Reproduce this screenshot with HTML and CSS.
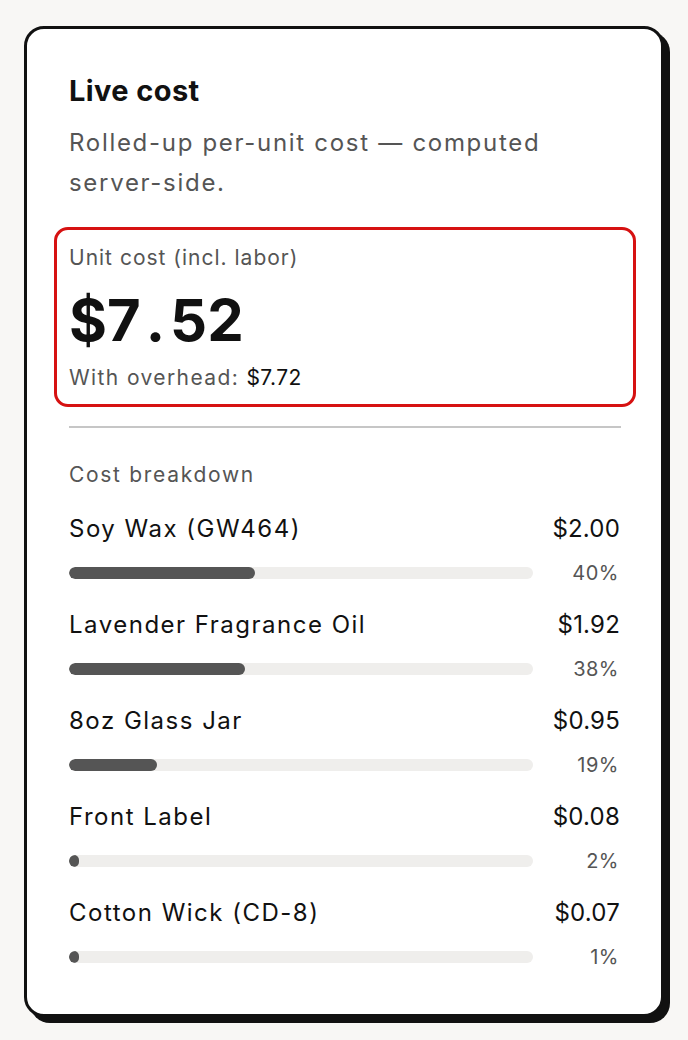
FILE: index.html
```html
<!DOCTYPE html>
<html lang="en">
<head>
  <meta charset="UTF-8" />
  <meta name="viewport" content="width=device-width, initial-scale=1" />
  <title>Live cost</title>
  <link rel="stylesheet" href="styles.css">
</head>
<body>
  <div class="card">
    <h2 class="title">Live cost</h2>
    <p class="sub">Rolled-up per-unit cost — computed server-side.</p>

    <div class="unit">
      <div class="unit-label">Unit cost (incl. labor)</div>
      <div class="unit-value">$7<span class="dot">.</span>52</div>
      <div class="unit-extra">With overhead: <span class="strong">$7.72</span></div>
    </div>

    <hr class="divider" />

    <h3 class="section">Cost breakdown</h3>
    <ul class="items">
      <li class="item">
        <div class="item-head"><span class="name">Soy Wax (GW464)</span><span class="price">$2.00</span></div>
        <div class="item-bar"><div class="track"><div class="fill" style="width:40%"></div></div><span class="pct">40%</span></div>
      </li>
      <li class="item">
        <div class="item-head"><span class="name">Lavender Fragrance Oil</span><span class="price">$1.92</span></div>
        <div class="item-bar"><div class="track"><div class="fill" style="width:38%"></div></div><span class="pct">38%</span></div>
      </li>
      <li class="item">
        <div class="item-head"><span class="name">8oz Glass Jar</span><span class="price">$0.95</span></div>
        <div class="item-bar"><div class="track"><div class="fill" style="width:19%"></div></div><span class="pct">19%</span></div>
      </li>
      <li class="item">
        <div class="item-head"><span class="name">Front Label</span><span class="price">$0.08</span></div>
        <div class="item-bar"><div class="track"><div class="fill" style="width:2%"></div></div><span class="pct">2%</span></div>
      </li>
      <li class="item">
        <div class="item-head"><span class="name">Cotton Wick (CD-8)</span><span class="price">$0.07</span></div>
        <div class="item-bar"><div class="track"><div class="fill" style="width:1%"></div></div><span class="pct">1%</span></div>
      </li>
    </ul>
  </div>
</body>
</html>
```

FILE: styles.css
```css
:root {
  --ink: #111;
  --muted: #555;
  --red: #d61111;
  --track: #efeeec;
  font-family: "Inter", "Liberation Sans", sans-serif;
}

* {
  box-sizing: border-box;
  margin: 0;
  padding: 0;
}

body {
  background: #f8f7f5;
  padding: 26px 24px;
  color: var(--ink);
}

.card {
  background: #fff;
  border: 3px solid var(--ink);
  border-radius: 20px;
  box-shadow: 6px 6px 0 var(--ink);
  padding: 40px 40px 43px 42px;
}

.title {
  font-size: 29px;
  font-weight: 700;
  line-height: 36px;
  letter-spacing: 0.4px;
  margin-top: 4px;
}

.sub {
  margin-top: 14px;
  font-size: 24px;
  line-height: 40px;
  color: var(--muted);
  letter-spacing: 1.7px;
}

.unit {
  margin: 24px -15px 0;
  border: 3px solid var(--red);
  border-radius: 14px;
  padding: 14px 12px 12px;
}

.unit-label {
  font-size: 21px;
  line-height: 28px;
  letter-spacing: 1px;
  color: var(--muted);
}

.unit-value {
  margin-top: 15px;
  font-size: 58px;
  font-weight: 700;
  line-height: 66px;
}

.unit-value .dot {
  margin: 0 5px;
}

.unit-extra {
  margin-top: 11px;
  font-size: 21px;
  line-height: 28px;
  letter-spacing: 1.4px;
  color: var(--muted);
}

.unit-extra .strong {
  color: var(--ink);
  letter-spacing: 0.4px;
}

.divider {
  margin-top: 19px;
  border: none;
  height: 2px;
  background: #c6c6c6;
}

.section {
  margin-top: 33px;
  font-size: 21px;
  font-weight: 400;
  line-height: 28px;
  color: var(--muted);
  letter-spacing: 1.7px;
}

.items {
  list-style: none;
  margin-top: 24px;
  display: flex;
  flex-direction: column;
  gap: 22px;
}

.item-head {
  display: flex;
  justify-content: space-between;
  align-items: center;
  font-size: 24px;
  line-height: 32px;
}

.name {
  letter-spacing: 1.5px;
}

.price {
  padding-right: 1px;
  letter-spacing: 0.2px;
}

.item-bar {
  margin-top: 14px;
  display: grid;
  grid-template-columns: 1fr 68px;
  gap: 20px;
  align-items: center;
}

.track {
  height: 12px;
  border-radius: 6px;
  background: var(--track);
  overflow: hidden;
}

.fill {
  height: 100%;
  min-width: 10px;
  border-radius: 6px;
  background: var(--muted);
}

.pct {
  text-align: right;
  padding-right: 2px;
  font-size: 20px;
  line-height: 28px;
  letter-spacing: 0.5px;
  color: var(--muted);
}
```
